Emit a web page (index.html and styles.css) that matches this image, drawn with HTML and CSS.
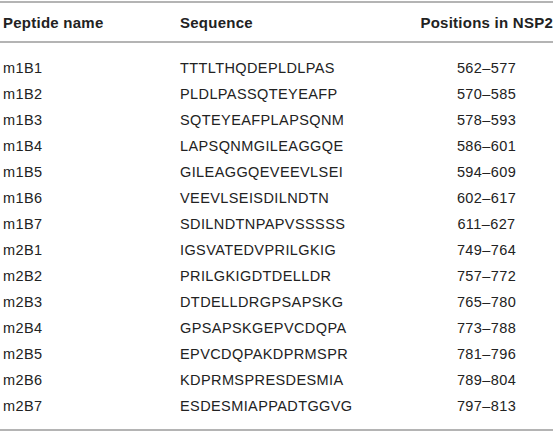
FILE: index.html
```html
<!DOCTYPE html>
<html>
<head>
<meta charset="utf-8">
<link rel="stylesheet" href="styles.css">
</head>
<body>
<table class="pep">
  <colgroup>
    <col class="c-name">
    <col class="c-seq">
    <col class="c-pos">
  </colgroup>
  <thead>
    <tr><th class="name">Peptide name</th><th class="seq">Sequence</th><th class="pos">Positions in NSP2</th></tr>
  </thead>
  <tbody>
    <tr class="first"><td class="name">m1B1</td><td class="seq">TTTLTHQDEPLDLPAS</td><td class="pos">562–577</td></tr>
    <tr><td class="name">m1B2</td><td class="seq">PLDLPASSQTEYEAFP</td><td class="pos">570–585</td></tr>
    <tr><td class="name">m1B3</td><td class="seq">SQTEYEAFPLAPSQNM</td><td class="pos">578–593</td></tr>
    <tr><td class="name">m1B4</td><td class="seq">LAPSQNMGILEAGGQE</td><td class="pos">586–601</td></tr>
    <tr><td class="name">m1B5</td><td class="seq">GILEAGGQEVEEVLSEI</td><td class="pos">594–609</td></tr>
    <tr><td class="name">m1B6</td><td class="seq">VEEVLSEISDILNDTN</td><td class="pos">602–617</td></tr>
    <tr><td class="name">m1B7</td><td class="seq">SDILNDTNPAPVSSSSS</td><td class="pos">611–627</td></tr>
    <tr><td class="name">m2B1</td><td class="seq">IGSVATEDVPRILGKIG</td><td class="pos">749–764</td></tr>
    <tr><td class="name">m2B2</td><td class="seq">PRILGKIGDTDELLDR</td><td class="pos">757–772</td></tr>
    <tr><td class="name">m2B3</td><td class="seq">DTDELLDRGPSAPSKG</td><td class="pos">765–780</td></tr>
    <tr><td class="name">m2B4</td><td class="seq">GPSAPSKGEPVCDQPA</td><td class="pos">773–788</td></tr>
    <tr><td class="name">m2B5</td><td class="seq">EPVCDQPAKDPRMSPR</td><td class="pos">781–796</td></tr>
    <tr><td class="name">m2B6</td><td class="seq">KDPRMSPRESDESMIA</td><td class="pos">789–804</td></tr>
    <tr class="last"><td class="name">m2B7</td><td class="seq">ESDESMIAPPADTGGVG</td><td class="pos">797–813</td></tr>
  </tbody>
</table>
</body>
</html>
```
FILE: styles.css
```css
html, body {
  margin: 0;
  padding: 0;
  background: #ffffff;
}
body {
  font-family: "Liberation Sans", Arial, sans-serif;
  color: #222222;
}
.pep {
  border-collapse: collapse;
  table-layout: fixed;
  width: 553px;
  margin-top: 1px;
  border-top: 2px solid #b4b4b4;
  border-bottom: 2px solid #b4b4b4;
}
.c-name { width: 180px; }
.c-seq { width: 240px; }
.c-pos { width: 133px; }
.pep th {
  font-size: 15px;
  font-weight: bold;
  letter-spacing: 0.25px;
  text-align: left;
  height: 38px;
  padding: 0;
  border-bottom: 2px solid #b4b4b4;
  vertical-align: middle;
  white-space: nowrap;
}
.pep td {
  font-size: 14.5px;
  letter-spacing: 0.4px;
  height: 26px;
  padding: 0;
  vertical-align: middle;
  white-space: nowrap;
}
.pep .name { padding-left: 3px; }
.pep .pos { text-align: center; }
.pep th.pos { text-align: right; }
.pep tr.first td { padding-top: 12px; }
.pep tr.last td { padding-bottom: 10px; }
```
